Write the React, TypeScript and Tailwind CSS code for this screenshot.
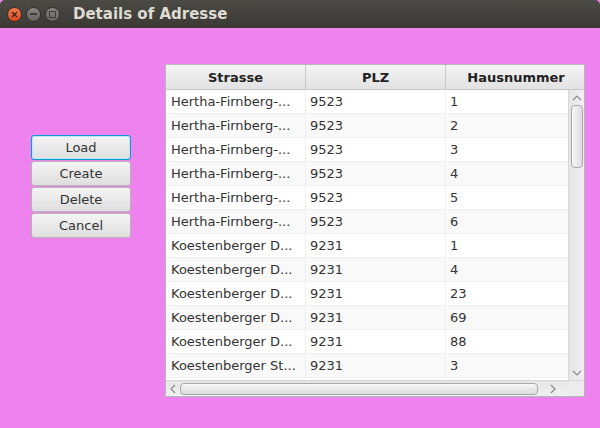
import React from 'react';

const rows = [
  { strasse: 'Hertha-Firnberg-...', plz: '9523', nr: '1' },
  { strasse: 'Hertha-Firnberg-...', plz: '9523', nr: '2' },
  { strasse: 'Hertha-Firnberg-...', plz: '9523', nr: '3' },
  { strasse: 'Hertha-Firnberg-...', plz: '9523', nr: '4' },
  { strasse: 'Hertha-Firnberg-...', plz: '9523', nr: '5' },
  { strasse: 'Hertha-Firnberg-...', plz: '9523', nr: '6' },
  { strasse: 'Koestenberger D...', plz: '9231', nr: '1' },
  { strasse: 'Koestenberger D...', plz: '9231', nr: '4' },
  { strasse: 'Koestenberger D...', plz: '9231', nr: '23' },
  { strasse: 'Koestenberger D...', plz: '9231', nr: '69' },
  { strasse: 'Koestenberger D...', plz: '9231', nr: '88' },
  { strasse: 'Koestenberger St...', plz: '9231', nr: '3' },
  // partly hidden row under the scrollbar, only its top edge shows
  { strasse: '', plz: '', nr: '' },
];

const font = { fontFamily: '"DejaVu Sans", sans-serif' };

const Chevron = ({ dir }: { dir: 'up' | 'down' | 'left' | 'right' }) => {
  const d = {
    up: 'M1 5 L5 1 L9 5',
    down: 'M1 1 L5 5 L9 1',
    left: 'M5 1 L1 5 L5 9',
    right: 'M1 1 L5 5 L1 9',
  }[dir];
  const vertical = dir === 'up' || dir === 'down';
  return (
    <svg width={vertical ? 10 : 6} height={vertical ? 6 : 10} viewBox={vertical ? '0 0 10 6' : '0 0 6 10'}>
      <path d={d} fill="none" stroke="#8a8a8a" strokeWidth="1.2" />
    </svg>
  );
};

const WinButton = ({ kind }: { kind: 'close' | 'min' | 'max' }) => {
  if (kind === 'close') {
    return (
      <div className="w-[15px] h-[15px] rounded-full bg-gradient-to-b from-[#f47b4f] to-[#d9491a] border border-[#3a2a22] flex items-center justify-center">
        <svg width="7" height="7" viewBox="0 0 7 7">
          <path d="M1 1 L6 6 M6 1 L1 6" stroke="#3b2116" strokeWidth="1.3" />
        </svg>
      </div>
    );
  }
  return (
    <div className="w-[15px] h-[15px] rounded-full bg-gradient-to-b from-[#8a8883] to-[#65635e] border border-[#2f2e2b] flex items-center justify-center">
      {kind === 'min' ? (
        <div className="w-[7px] h-[2px] bg-[#3c3b37]" />
      ) : (
        <div className="w-[7px] h-[7px] border-[1.5px] border-[#3c3b37]" />
      )}
    </div>
  );
};

const SideButton = ({ label, focused }: { label: string; focused?: boolean }) => (
  <button
    className={`w-[100px] h-[25px] rounded-[3px] bg-gradient-to-b from-[#f4f4f4] to-[#dedede] text-[13px] text-[#333333] flex items-center justify-center pt-[1px] ${
      focused ? 'border border-[#039ed3] shadow-[inset_0_0_0_1px_#bfe6f4]' : 'border border-[#b5b5b5]'
    }`}
    style={font}
  >
    {label}
  </button>
);

export default function App() {
  return (
    <div className="w-[600px] h-[428px] bg-[#ee82ee] flex flex-col overflow-hidden" style={font}>
      {/* Title bar */}
      <div className="h-[28px] bg-gradient-to-b from-[#4b4a45] to-[#3a3935] flex items-center pl-[7px] rounded-t-[5px]">
        <div className="flex items-center gap-[4px]">
          <WinButton kind="close" />
          <WinButton kind="min" />
          <WinButton kind="max" />
        </div>
        <span className="ml-[13px] text-[15px] font-bold text-[#dfdbd2]">Details of Adresse</span>
      </div>

      <div className="flex flex-1">
        {/* Buttons */}
        <div className="w-[165px] flex flex-col pl-[31px] pt-[107px] gap-[1px]">
          <SideButton label="Load" focused />
          <SideButton label="Create" />
          <SideButton label="Delete" />
          <SideButton label="Cancel" />
        </div>

        {/* Table */}
        <div className="mt-[36px] w-[420px] h-[333px] border border-[#b8b8b8] bg-white flex flex-col">
          <div className="h-[25px] flex bg-gradient-to-b from-[#f4f4f4] to-[#e2e2e2] border-b border-[#c8c8c8] text-[13px] font-bold text-[#222222] shrink-0">
            <div className="w-[140px] border-r border-[#c8c8c8] flex items-center justify-center pt-[1px]">Strasse</div>
            <div className="w-[140px] border-r border-[#c8c8c8] flex items-center justify-center pt-[1px]">PLZ</div>
            <div className="flex-1 flex items-center justify-center pl-[2px] pt-[1px]">Hausnummer</div>
          </div>

          <div className="flex flex-1 min-h-0">
            <div className="flex-1 overflow-hidden">
              {rows.map((r, i) => (
                <div
                  key={i}
                  className={`h-[24px] flex border-b border-[#efefef] text-[13px] text-[#333333] pt-[1px] ${
                    i % 2 === 0 ? 'bg-white' : 'bg-[#f9f9f9]'
                  }`}
                >
                  <div className="w-[140px] border-r border-[#efefef] flex items-center pl-[5px]">{r.strasse}</div>
                  <div className="w-[140px] border-r border-[#efefef] flex items-center pl-[4px]">{r.plz}</div>
                  <div className="flex-1 flex items-center pl-[4px]">{r.nr}</div>
                </div>
              ))}
            </div>
            {/* Vertical scrollbar */}
            <div className="w-[16px] bg-gradient-to-r from-[#e6e6e6] to-[#f0f0f0] border-l border-[#d6d6d6] flex flex-col items-center">
              <div className="h-[14px] flex items-center justify-center pt-[2px]">
                <Chevron dir="up" />
              </div>
              <div className="w-[12px] h-[63px] rounded-[4px] border border-[#a8a8a8] bg-gradient-to-r from-[#f7f7f7] to-[#dcdcdc] mt-[1px]" />
              <div className="flex-1" />
              <div className="h-[14px] flex items-center justify-center">
                <Chevron dir="down" />
              </div>
            </div>
          </div>

          {/* Horizontal scrollbar */}
          <div className="h-[16px] flex shrink-0 border-t border-[#d6d6d6]">
            <div className="flex-1 bg-gradient-to-b from-[#e6e6e6] to-[#f0f0f0] flex items-center">
              <div className="w-[14px] flex justify-center">
                <Chevron dir="left" />
              </div>
              <div className="w-[358px] h-[12px] rounded-[4px] border border-[#a8a8a8] bg-gradient-to-b from-[#f7f7f7] to-[#dcdcdc]" />
              <div className="flex-1 flex justify-center">
                <Chevron dir="right" />
              </div>
            </div>
            <div className="w-[16px] bg-[#ececec]" />
          </div>
        </div>
      </div>
    </div>
  );
}
